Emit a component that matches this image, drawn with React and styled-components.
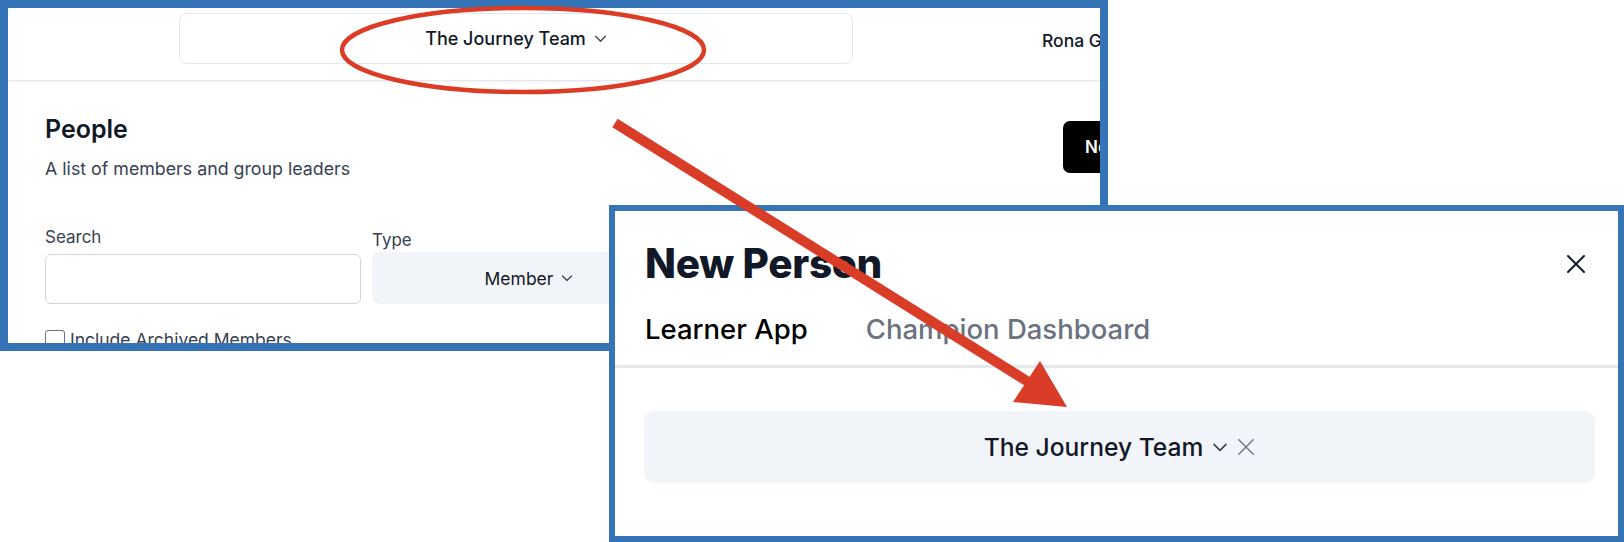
import React from 'react'
import styled, { createGlobalStyle } from 'styled-components'

const GlobalStyle = createGlobalStyle`
  html, body {
    margin: 0;
    padding: 0;
    background: #ffffff;
  }
  body {
    font-family: Inter, "Noto Sans", "Liberation Sans", sans-serif;
    color: #111827;
  }
  * { box-sizing: border-box; }
`

const Canvas = styled.div`
  position: relative;
  width: 1624px;
  height: 542px;
  overflow: hidden;
  background: #ffffff;
`

const Shot = styled.div`
  position: absolute;
  left: ${p => p.x}px;
  top: ${p => p.y}px;
  width: ${p => p.w}px;
  height: ${p => p.h}px;
  border: ${p => p.border}px solid #3574b6;
  background: #ffffff;
  overflow: hidden;
`

/* ---------- people page ---------- */

const Header = styled.div`
  display: flex;
  align-items: flex-start;
  height: 73px;
  padding: 5px 0 0 171px;
  border-bottom: 1px solid #e5e7eb;
  box-shadow: 0 1px 3px rgba(15, 23, 42, 0.06);
`

const TeamSelect = styled.div`
  width: 674px;
  height: 51px;
  flex-shrink: 0;
  display: flex;
  align-items: center;
  justify-content: center;
  gap: 8px;
  border: 1px solid #e2e8f0;
  border-radius: 8px;
  font-size: 18px;
  font-weight: 500;
  color: #111827;
`

const UserName = styled.div`
  margin: 16px 0 0 189px;
  font-size: 17.5px;
  line-height: 24px;
  font-weight: 500;
  white-space: nowrap;
  color: #111827;
`

const Body = styled.div`
  width: 1400px;
  padding: 32px 0 0 37px;
`

const TitleRow = styled.div`
  display: grid;
  grid-template-columns: 1018px auto;
  align-items: start;
  justify-items: start;
`

const PageTitle = styled.h1`
  margin: 0;
  font-size: 25px;
  line-height: 32px;
  font-weight: 600;
  color: #111827;
`

const Subtitle = styled.p`
  margin: 12px 0 0;
  font-size: 17.8px;
  line-height: 24px;
  color: #374151;
`

const DarkButton = styled.button`
  margin-top: 8px;
  height: 52px;
  padding: 0 22px;
  border: none;
  border-radius: 7px;
  background: #000000;
  color: #ffffff;
  font-family: inherit;
  font-size: 17px;
  font-weight: 600;
  white-space: nowrap;
`

const Filters = styled.div`
  display: flex;
  gap: 11px;
  margin-top: 43px;
`

const Field = styled.div`
  display: flex;
  flex-direction: column;
  padding-top: ${p => p.offset || 0}px;
`

const Label = styled.label`
  font-size: 17px;
  line-height: 24px;
  color: #374151;
  margin-bottom: ${p => p.gap}px;
`

const TextInput = styled.div`
  width: 316px;
  height: 50px;
  border: 1px solid #d1d5db;
  border-radius: 6px;
  background: #ffffff;
`

const GraySelect = styled.div`
  width: ${p => p.w}px;
  height: ${p => p.h}px;
  display: flex;
  align-items: center;
  justify-content: center;
  gap: ${p => p.gap || 8}px;
  background: #f1f4f9;
  border-radius: ${p => p.radius}px;
  font-size: ${p => p.size}px;
  font-weight: ${p => p.weight || 500};
  color: #111827;
`

const CheckRow = styled.div`
  display: flex;
  align-items: center;
  gap: 5px;
  margin-top: 25px;
  font-size: 17.5px;
  color: #374151;
`

const CheckBox = styled.span`
  width: 20px;
  height: 20px;
  border: 1px solid #6b7280;
  border-radius: 3px;
  background: #ffffff;
`

/* ---------- new person modal ---------- */

const ModalHead = styled.div`
  display: flex;
  align-items: center;
  justify-content: space-between;
  padding: 29px 32px 0 30px;
`

const ModalTitle = styled.h2`
  margin: 0;
  font-size: 40.5px;
  line-height: 48px;
  font-weight: 800;
  letter-spacing: -0.3px;
  color: #111827;
`

const CloseButton = styled.span`
  display: flex;
  width: 20px;
  height: 20px;
  color: #111827;
`

const Tabs = styled.div`
  display: flex;
  gap: 58px;
  margin-top: 23px;
  padding: 0 0 18px 30px;
  border-bottom: 3px solid #e5e7eb;
`

const Tab = styled.div`
  font-size: 27.5px;
  line-height: 36px;
  font-weight: 500;
  color: ${p => (p.active ? '#000000' : '#6b7280')};
`

const ModalBody = styled.div`
  padding: 43px 24px 0 29px;
`

const FieldLabel = styled.div`
  margin-top: 50px;
  padding-left: 1px;
  font-size: 17px;
  line-height: 24px;
  font-weight: 500;
  color: #374151;
`

const Chevron = ({ size = 12, color = '#374151' }) => (
  <svg width={size} height={size} viewBox="0 0 12 12" fill="none">
    <path d="M1.5 4l4.5 4.5L10.5 4" stroke={color} strokeWidth="1.2" strokeLinecap="round" strokeLinejoin="round" />
  </svg>
)

const Cross = ({ size = 20, color = '#111827', width = 2 }) => (
  <svg width={size} height={size} viewBox="0 0 20 20" fill="none">
    <path d="M2 2l16 16M18 2L2 18" stroke={color} strokeWidth={width} strokeLinecap="round" />
  </svg>
)

const Overlay = styled.svg`
  position: absolute;
  left: 0;
  top: 0;
  pointer-events: none;
`

class App extends React.Component {
  render() {
    return (
      <Canvas>
        <GlobalStyle />

        <Shot x={0} y={0} w={1108} h={351} border={8}>
          <Header>
            <TeamSelect>
              The Journey Team <Chevron size={13} />
            </TeamSelect>
            <UserName>Rona Gilbert</UserName>
          </Header>
          <Body>
            <TitleRow>
              <div>
                <PageTitle>People</PageTitle>
                <Subtitle>A list of members and group leaders</Subtitle>
              </div>
              <DarkButton>New Person</DarkButton>
            </TitleRow>
            <Filters>
              <Field offset={1}>
                <Label gap={5}>Search</Label>
                <TextInput />
              </Field>
              <Field offset={4}>
                <Label gap={0}>Type</Label>
                <GraySelect w={314} h={52} radius={8} size={17.5} weight={400}>
                  Member <Chevron size={12} />
                </GraySelect>
              </Field>
            </Filters>
            <CheckRow>
              <CheckBox />
              Include Archived Members
            </CheckRow>
          </Body>
        </Shot>

        <Shot x={609} y={205} w={1015} h={337} border={6}>
          <ModalHead>
            <ModalTitle>New Person</ModalTitle>
            <CloseButton>
              <Cross size={20} width={2} />
            </CloseButton>
          </ModalHead>
          <Tabs>
            <Tab active>Learner App</Tab>
            <Tab>Champion Dashboard</Tab>
          </Tabs>
          <ModalBody>
            <GraySelect w={951} h={72} radius={10} size={24.6} gap={9}>
              The Journey Team
              <Chevron size={16} color="#374151" />
              <Cross size={18} color="#6b7280" width={1.5} />
            </GraySelect>
            <FieldLabel>First Name</FieldLabel>
          </ModalBody>
        </Shot>

        <Overlay width="1624" height="542" viewBox="0 0 1624 542">
          <ellipse cx="523" cy="50" rx="181" ry="42" fill="none" stroke="#dc3b26" strokeWidth="4.5" />
          <line x1="615" y1="123" x2="1030" y2="383" stroke="#d93c27" strokeWidth="10" />
          <polygon points="1067,407 1013,402 1040,361" fill="#d93c27" />
        </Overlay>
      </Canvas>
    )
  }
}

export default App
